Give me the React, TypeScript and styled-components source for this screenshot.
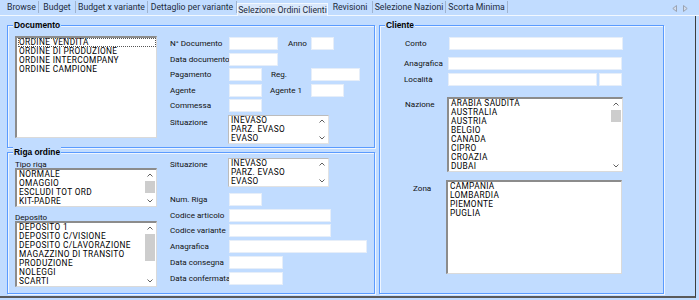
import React from "react";
import styled, { createGlobalStyle } from "styled-components";

const BG = "#C1DCFF";

const Global = createGlobalStyle`
  html, body { margin: 0; padding: 0; background: ${BG}; }
  body { width: 699px; height: 300px; overflow: hidden; }
  * { box-sizing: border-box; }
`;

const Screen = styled.div`
  width: 699px;
  height: 300px;
  background: ${BG};
  font-family: Roboto, "Liberation Sans", sans-serif;
  color: #000;
  display: flex;
  flex-direction: column;
`;

const TabStrip = styled.div`
  height: 16px;
  display: flex;
  align-items: flex-end;
  padding-left: 5px;
  border-bottom: 1px solid #f2f8ff;
`;

const Tab = styled.div<{ $w: number; $active?: boolean }>`
  width: ${(p) => p.$w}px;
  height: ${(p) => (p.$active ? 13 : 12)}px;
  font-size: 8.7px;
  line-height: 12px;
  text-align: center;
  color: #1d2b3c;
  white-space: nowrap;
  border-right: 1px solid ${(p) => (p.$active ? "#f2f8ff" : "#9fb3cf")};
  border-left: ${(p) => (p.$active ? "1px solid #f2f8ff" : "none")};
  border-top: ${(p) => (p.$active ? "1px solid #f2f8ff" : "none")};
  background: ${(p) => (p.$active ? "#d9e8fc" : "transparent")};
  margin-bottom: ${(p) => (p.$active ? -1 : 2)}px;
`;

const TabArrows = styled.div`
  margin-left: auto;
  display: flex;
  gap: 6px;
  padding-right: 11px;
  align-self: flex-start;
  padding-top: 5px;
`;

const Panel = styled.div`
  width: 696px;
  height: 282px;
  border-right: 1px solid #3e3e3e;
  border-bottom: 2px solid #5a5a5a;
  display: flex;
  gap: 4px;
  padding: 9px 0 0 7px;
`;

const LeftColumn = styled.div`
  display: flex;
  flex-direction: column;
  gap: 4px;
`;

const GroupBox = styled.div<{ $w: number; $h: number }>`
  position: relative;
  width: ${(p) => p.$w}px;
  height: ${(p) => p.$h}px;
  border: 1px solid #5a9bff;
  box-shadow: inset 1px 1px 0 #eef5ff, 1px 1px 0 #eef5ff;
`;

const Legend = styled.span`
  position: absolute;
  top: -6px;
  left: 5px;
  padding: 0 1px;
  background: ${BG};
  font-family: "Liberation Sans", Arial, sans-serif;
  font-weight: bold;
  font-size: 8.4px;
  line-height: 10px;
  color: #000;
`;

const DocBody = styled.div`
  display: flex;
  padding: 10px 0 0 7px;
`;

const RigaBody = styled.div`
  display: flex;
  padding: 7px 0 0 7px;
`;

const Stack = styled.div`
  display: flex;
  flex-direction: column;
`;

const Form = styled.div<{ $gap: number; $top?: number }>`
  display: flex;
  flex-direction: column;
  gap: ${(p) => p.$gap}px;
  margin-left: 13px;
  margin-top: ${(p) => p.$top ?? 0}px;
`;

const Row = styled.div<{ $mt?: number }>`
  display: flex;
  align-items: flex-start;
  margin-top: ${(p) => p.$mt ?? 0}px;
`;

const Label = styled.div<{ $w?: number; $pt?: number; $ml?: number }>`
  width: ${(p) => (p.$w ? `${p.$w}px` : "auto")};
  flex: none;
  font-size: 8.1px;
  line-height: 12px;
  padding-top: ${(p) => p.$pt ?? 0}px;
  margin-left: ${(p) => p.$ml ?? 0}px;
  white-space: nowrap;
  color: #111;
`;

const Mid = styled.div`
  width: 82px;
  display: flex;
  align-items: flex-start;
  flex: none;
`;

const Caption = styled.div<{ $mt?: number }>`
  font-size: 8.1px;
  line-height: 8px;
  height: 8px;
  margin-top: ${(p) => p.$mt ?? 0}px;
  color: #111;
`;

const Field = styled.div<{ $w: number; $ml?: number }>`
  width: ${(p) => p.$w}px;
  height: 13px;
  flex: none;
  background: #fff;
  border: 1px solid #e6eef9;
  margin-left: ${(p) => p.$ml ?? 0}px;
`;

const ListBox = styled.div<{ $w: number; $h: number; $light?: boolean; $ml?: number }>`
  width: ${(p) => p.$w}px;
  height: ${(p) => p.$h}px;
  flex: none;
  background: #fff;
  display: flex;
  margin-left: ${(p) => p.$ml ?? 0}px;
  border-style: solid;
  border-width: ${(p) => (p.$light ? "1px" : "2px 1px 1px 2px")};
  border-color: ${(p) =>
    p.$light ? "#bcbcbc #e2e2e2 #e2e2e2 #bcbcbc" : "#8c8c8c #dadada #dadada #8c8c8c"};
  overflow: hidden;
`;

const Items = styled.div`
  flex: 1;
  padding-left: 1px;
  overflow: hidden;
`;

const Item = styled.div<{ $focus?: boolean }>`
  font-family: Roboto, "Liberation Sans", sans-serif;
  font-size: 8.3px;
  letter-spacing: 0.35px;
  line-height: 9px;
  height: 9px;
  padding-left: 1px;
  white-space: nowrap;
  color: #000;
  outline: ${(p) => (p.$focus ? "1px dotted #555" : "none")};
  outline-offset: -1px;
`;

const ScrollBar = styled.div`
  width: 10px;
  margin-right: 1px;
  display: flex;
  flex-direction: column;
  flex: none;
`;

const ArrowBtn = styled.div`
  height: 10px;
  display: flex;
  align-items: center;
  justify-content: center;
  flex: none;
`;

const Track = styled.div`
  flex: 1;
`;

const Thumb = styled.div`
  width: 10px;
  background: #cdcdcd;
`;

const Chevron = ({ up }: { up?: boolean }) => (
  <svg width="6" height="4" viewBox="0 0 6 4">
    <path
      d={up ? "M0.5 3.5 L3 1 L5.5 3.5" : "M0.5 0.5 L3 3 L5.5 0.5"}
      fill="none"
      stroke="#606060"
      strokeWidth="1"
    />
  </svg>
);

const Scroll = ({ thumbTop, thumbH }: { thumbTop?: number; thumbH?: number }) => (
  <ScrollBar>
    <ArrowBtn>
      <Chevron up />
    </ArrowBtn>
    <Track>
      {thumbH ? <Thumb style={{ marginTop: thumbTop, height: thumbH }} /> : null}
    </Track>
    <ArrowBtn>
      <Chevron />
    </ArrowBtn>
  </ScrollBar>
);

const ArrowIcon = ({ left }: { left?: boolean }) => (
  <svg width="5" height="7" viewBox="0 0 5 7">
    <path
      d={left ? "M4.5 0.5 L0.8 3.5 L4.5 6.5 Z" : "M0.5 0.5 L4.2 3.5 L0.5 6.5 Z"}
      fill="#d4dceb"
      stroke="#9aa3b2"
      strokeWidth="1"
    />
  </svg>
);

const tabs: [string, number][] = [
  ["Browse", 34],
  ["Budget", 37],
  ["Budget x variante", 72],
  ["Dettaglio per variante", 89],
  ["Selezione Ordini Clienti", 91],
  ["Revisioni", 45],
  ["Selezione Nazioni", 73],
  ["Scorta Minima", 62],
];

const situazione = ["INEVASO", "PARZ. EVASO", "EVASO"];

const ClienteBody = styled.div`
  display: flex;
  flex-direction: column;
  padding: 11px 0 0 24px;
`;

export default function App() {
  return (
    <Screen>
      <Global />
      <TabStrip>
        {tabs.map(([t, w], i) => (
          <Tab key={t} $w={w} $active={i === 4}>
            {t}
          </Tab>
        ))}
        <TabArrows>
          <ArrowIcon left />
          <ArrowIcon />
        </TabArrows>
      </TabStrip>
      <Panel>
        <LeftColumn>
          <GroupBox $w={368} $h={123}>
            <Legend>Documento</Legend>
            <DocBody>
              <ListBox $w={142} $h={102}>
                <Items>
                  <Item $focus>ORDINE VENDITA</Item>
                  <Item>ORDINE DI PRODUZIONE</Item>
                  <Item>ORDINE INTERCOMPANY</Item>
                  <Item>ORDINE CAMPIONE</Item>
                </Items>
              </ListBox>
              <Form $gap={2.5} $top={1}>
                <Row>
                  <Label $w={59}>N° Documento</Label>
                  <Mid>
                    <Field $w={49} />
                    <Label $ml={10}>Anno</Label>
                  </Mid>
                  <Field $w={23} />
                </Row>
                <Row>
                  <Label $w={59}>Data documento</Label>
                  <Field $w={49} />
                </Row>
                <Row>
                  <Label $w={59}>Pagamento</Label>
                  <Mid>
                    <Field $w={33} />
                    <Label $ml={9}>Reg.</Label>
                  </Mid>
                  <Field $w={49} />
                </Row>
                <Row>
                  <Label $w={59}>Agente</Label>
                  <Mid>
                    <Field $w={33} />
                    <Label $ml={8}>Agente 1</Label>
                  </Mid>
                  <Field $w={33} />
                </Row>
                <Row>
                  <Label $w={59}>Commessa</Label>
                  <Field $w={33} />
                </Row>
                <Row>
                  <Label $w={58} $pt={1}>Situazione</Label>
                  <ListBox $w={101} $h={29} $light>
                    <Items>
                      {situazione.map((s) => (
                        <Item key={s}>{s}</Item>
                      ))}
                    </Items>
                    <Scroll />
                  </ListBox>
                </Row>
              </Form>
            </DocBody>
          </GroupBox>
          <GroupBox $w={368} $h={142}>
            <Legend>Riga ordine</Legend>
            <RigaBody>
              <Stack>
                <Caption>Tipo riga</Caption>
                <ListBox $w={142} $h={39}>
                  <Items>
                    <Item>NORMALE</Item>
                    <Item>OMAGGIO</Item>
                    <Item>ESCLUDI TOT ORD</Item>
                    <Item>KIT-PADRE</Item>
                  </Items>
                  <Scroll thumbTop={1} thumbH={12} />
                </ListBox>
                <Caption $mt={6}>Deposito</Caption>
                <ListBox $w={142} $h={66}>
                  <Items>
                    <Item>DEPOSITO 1</Item>
                    <Item>DEPOSITO C/VISIONE</Item>
                    <Item>DEPOSITO C/LAVORAZIONE</Item>
                    <Item>MAGAZZINO DI TRANSITO</Item>
                    <Item>PRODUZIONE</Item>
                    <Item>NOLEGGI</Item>
                    <Item>SCARTI</Item>
                  </Items>
                  <Scroll thumbTop={1} thumbH={27} />
                </ListBox>
              </Stack>
              <Form $gap={2.8} $top={-2}>
                <Row>
                  <Label $w={58} $pt={0}>Situazione</Label>
                  <ListBox $w={101} $h={29} $light>
                    <Items>
                      {situazione.map((s) => (
                        <Item key={s}>{s}</Item>
                      ))}
                    </Items>
                    <Scroll />
                  </ListBox>
                </Row>
                <Row $mt={3}>
                  <Label $w={59}>Num. Riga</Label>
                  <Field $w={33} />
                </Row>
                <Row>
                  <Label $w={59}>Codice articolo</Label>
                  <Field $w={102} />
                </Row>
                <Row>
                  <Label $w={59}>Codice variante</Label>
                  <Field $w={102} />
                </Row>
                <Row>
                  <Label $w={59}>Anagrafica</Label>
                  <Field $w={138} />
                </Row>
                <Row>
                  <Label $w={59}>Data consegna</Label>
                  <Field $w={54} />
                </Row>
                <Row>
                  <Label $w={59}>Data confermata</Label>
                  <Field $w={54} />
                </Row>
              </Form>
            </RigaBody>
          </GroupBox>
        </LeftColumn>
        <GroupBox $w={285} $h={269}>
          <Legend>Cliente</Legend>
          <ClienteBody>
            <Row>
              <Label $w={44} $ml={1}>Conto</Label>
              <Field $w={174} />
            </Row>
            <Row $mt={7}>
              <Label $w={44}>Anagrafica</Label>
              <Field $w={174} />
            </Row>
            <Row $mt={3}>
              <Label $w={44}>Località</Label>
              <Field $w={149} />
              <Field $w={23} $ml={2} />
            </Row>
            <Row $mt={11}>
              <Label $w={42} $ml={1} $pt={1}>Nazione</Label>
              <ListBox $w={176} $h={75}>
                <Items>
                  {["ARABIA SAUDITA", "AUSTRALIA", "AUSTRIA", "BELGIO", "CANADA", "CIPRO", "CROAZIA", "DUBAI"].map(
                    (n) => (
                      <Item key={n}>{n}</Item>
                    )
                  )}
                </Items>
                <Scroll thumbTop={1} thumbH={12} />
              </ListBox>
            </Row>
            <Row $mt={8}>
              <Label $w={33} $ml={9} $pt={2}>Zona</Label>
              <ListBox $w={176} $h={94}>
                <Items>
                  {["CAMPANIA", "LOMBARDIA", "PIEMONTE", "PUGLIA"].map((n) => (
                    <Item key={n}>{n}</Item>
                  ))}
                </Items>
              </ListBox>
            </Row>
          </ClienteBody>
        </GroupBox>
      </Panel>
    </Screen>
  );
}
